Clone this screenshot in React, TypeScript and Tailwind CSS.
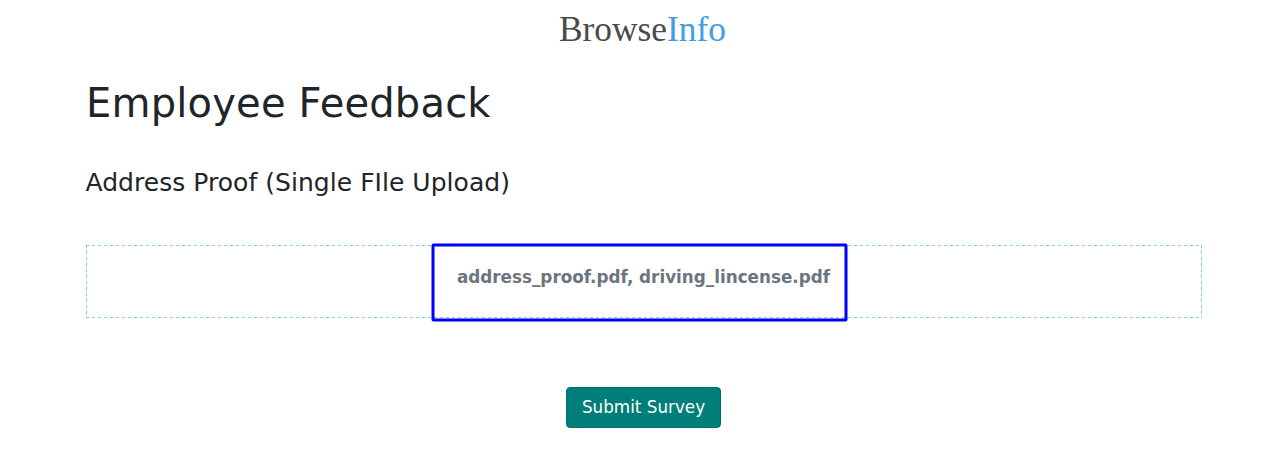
export default function App() {
  return (
    <div className="flex h-[464px] flex-col overflow-hidden bg-white pl-[86px] pr-[82px] font-['DejaVu_Sans',sans-serif] text-[#212529]">
      <header className="flex h-[60px] justify-center pr-[3px] pt-[8px] font-['Liberation_Serif',serif] text-[35.4px] leading-[42px] text-[#4a4a4a]">
        <span>Browse</span><span className="text-[#3f9ee4]">Info</span>
      </header>
      <h1 className="h-[104px] pt-[19px] text-[40px] leading-[48px] tracking-[0.2px]">Employee Feedback</h1>
      <h2 className="-ml-[0.5px] h-[81px] pt-[4px] text-[25px] leading-[30px] tracking-[0.04px]">Address Proof (Single FIle Upload)</h2>
      <div className="relative flex h-[73px] w-[1116px] justify-center bg-[repeating-linear-gradient(90deg,#86cbe0_0_3px,transparent_3px_6px),repeating-linear-gradient(90deg,#86cbe0_0_3px,transparent_3px_6px),repeating-linear-gradient(180deg,#7fccec_0_3px,#d8f0fa_3px_6px),repeating-linear-gradient(180deg,#86cbe0_0_3px,#d8f0fa_3px_6px)] bg-[size:100%_1px,100%_1px,1px_100%,1px_100%] bg-[position:0_0,0_100%,0_0,100%_0] bg-no-repeat">
        <p className="pr-px pt-[20px] text-[16.8px] font-bold leading-[24px] text-[#6c757d]">address_proof.pdf, driving_lincense.pdf</p>
        <svg className="absolute -top-[3px] left-[344px]" width="419" height="80" viewBox="0 0 419 80" fill="none" aria-hidden="true">
          <rect x="3" y="3" width="413" height="75" rx="0.5" stroke="#0000ff" strokeWidth="3" />
        </svg>
      </div>
      <div className="flex justify-center pr-[2px] pt-[69px]">
        <button className="h-[41px] w-[155px] rounded-[4px] border border-[#00716c] bg-[#017e7a] pb-[2px] pl-px text-[16.8px] leading-[24px] text-white">Submit Survey</button>
      </div>
    </div>
  );
}
